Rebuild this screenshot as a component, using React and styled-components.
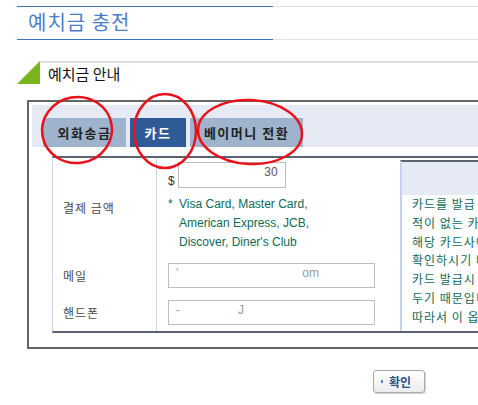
import React from 'react';
import styled, { createGlobalStyle } from 'styled-components';

const GlobalStyle = createGlobalStyle`
  html, body {
    margin: 0;
    padding: 0;
    background: #fff;
    overflow: hidden;
  }
  body {
    font-family: "Noto Sans CJK KR", "Liberation Sans", sans-serif;
    font-size: 12px;
  }
`;

const blue = '#3f6fc1';
const gray = '#e4e4e4';
const dark = '#5b6272';
const pale = '#c8d0ea';
const band = '#e6eaf4';
const teal = '#0e6a57';

const Page = styled.div`
  position: relative;
  width: 478px;
  height: 405px;
  overflow: hidden;
  box-sizing: border-box;
  padding: 6px 0 0 17px;
`;

const Title = styled.h1`
  margin: 0;
  height: 34px;
  padding-left: 11px;
  font-size: 20px;
  font-weight: normal;
  line-height: 31px;
  color: #4b7dcc;
  letter-spacing: 1px;
  background:
    linear-gradient(${blue}, ${blue}) 0 0 / 256px 1px no-repeat,
    linear-gradient(${blue}, ${blue}) 0 100% / 256px 1px no-repeat,
    linear-gradient(${gray}, ${gray}) 0 0 / 100% 1px no-repeat,
    linear-gradient(${gray}, ${gray}) 0 100% / 100% 1px no-repeat;
`;

const SectionHead = styled.div`
  display: flex;
  height: 23px;
  margin-top: 21px;
`;

const SectionLabel = styled.h2`
  flex: 1;
  margin: 0;
  padding-left: 8px;
  border-top: 2px solid #dedede;
  font-size: 15px;
  font-weight: normal;
  line-height: 22px;
  color: #111;
`;

const Box = styled.div`
  width: 520px;
  margin: 16px 0 0 10px;
  padding: 3px 0 14px 3px;
  border: 2px solid #666;
  border-right: none;
`;

const TabBand = styled.div`
  display: flex;
  align-items: flex-end;
  gap: 4px;
  height: 42px;
  padding-left: 11px;
  background: ${band};
`;

const Tab = styled.div`
  display: flex;
  align-items: center;
  justify-content: center;
  width: ${(p) => p.$w}px;
  height: 29px;
  background: ${(p) => (p.$active ? '#2e5b95' : '#a0b3cc')};
  color: ${(p) => (p.$active ? '#fff' : '#222')};
  font-weight: bold;
  font-size: 13px;
  letter-spacing: 1.5px;
`;

const Table = styled.div`
  display: grid;
  grid-template-columns: 104px 243px 1fr;
  margin: 9px 0 0 20px;
  border-top: 2px solid ${dark};
  border-bottom: 2px solid ${dark};
  border-left: 1px solid ${pale};
`;

const Label = styled.div`
  display: flex;
  align-items: center;
  padding-left: 10px;
  border-right: 1px solid ${pale};
  color: #4a4a4a;
  letter-spacing: 1px;
  height: ${(p) => p.$h}px;
`;

const Cell = styled.div`
  display: flex;
  flex-direction: column;
  justify-content: ${(p) => (p.$top ? 'flex-start' : 'center')};
  padding: ${(p) => (p.$top ? '4px' : '0')} 0 0 11px;
  height: ${(p) => p.$h}px;
  box-sizing: border-box;
`;

const AmountRow = styled.div`
  display: flex;
  align-items: flex-end;
  gap: 3px;
  color: #333;
  font-family: "Liberation Sans", sans-serif;
`;

const Field = styled.div`
  display: flex;
  align-items: flex-start;
  justify-content: ${(p) => (p.$right ? 'flex-end' : 'flex-start')};
  box-sizing: border-box;
  width: ${(p) => p.$w}px;
  height: ${(p) => p.$h}px;
  padding: 2px 7px;
  border: 1px solid #bdbdbd;
  color: #555;
  font-family: "Liberation Sans", sans-serif;
  font-size: 12px;
  line-height: 14px;
`;

const Faint = styled.span`
  color: #999;
  margin-left: ${(p) => p.$at}px;
`;

const CardNote = styled.div`
  display: flex;
  margin-top: 7px;
  color: ${teal};
  font-family: "Liberation Sans", sans-serif;
  font-size: 12px;
  line-height: 19px;
`;

const Star = styled.span`
  width: 11px;
  flex: none;
`;

const Notice = styled.div`
  grid-column: 3;
  grid-row: 1 / span 3;
  margin-top: 2px;
  border-top: 2px solid ${dark};
  border-left: 2px solid ${pale};
`;

const NoticeHead = styled.div`
  height: 33px;
  background: ${band};
`;

const NoticeLine = styled.div`
  padding-left: 10px;
  white-space: nowrap;
  color: ${teal};
  line-height: 18.8px;
  letter-spacing: 1px;
`;

const Footer = styled.div`
  display: flex;
  margin-top: 21px;
  padding-left: 356px;
`;

const Button = styled.button`
  display: flex;
  align-items: center;
  gap: 6px;
  width: 52px;
  height: 23px;
  padding: 0 0 0 7px;
  border: 1px solid #aaa;
  border-radius: 3px;
  background: linear-gradient(#fff, #ececec);
  box-shadow: 1px 1px 1px rgba(0, 0, 0, 0.18);
  color: #2c4f8a;
  font-family: "Noto Sans CJK KR", sans-serif;
  font-size: 12px;
  font-weight: bold;
`;

const Dot = styled.span`
  width: 2px;
  height: 3px;
  background: #4a82c8;
`;

const Marks = styled.svg`
  position: absolute;
  left: 0;
  top: 0;
  pointer-events: none;
`;

const notice = [
  '카드를 발급 받으신',
  '적이 없는 카드사의',
  '해당 카드사에 문의하여',
  '확인하시기 바랍니다.',
  '카드 발급시 해외 결제',
  '두기 때문입니다.',
  '따라서 이 옵션을',
];

export default function App() {
  return (
    <Page>
      <GlobalStyle />
      <Title>예치금 충전</Title>

      <SectionHead>
        <svg width="23" height="23" viewBox="0 0 23 23">
          <polygon points="23,0 0,23 23,23" fill="#78b51c" />
        </svg>
        <SectionLabel>예치금 안내</SectionLabel>
      </SectionHead>

      <Box>
        <TabBand>
          <Tab $w={83}>외화송금</Tab>
          <Tab $w={56} $active>카드</Tab>
          <Tab $w={113}>베이머니 전환</Tab>
        </TabBand>

        <Table>
          <Label $h={99}>결제 금액</Label>
          <Cell $h={99} $top>
            <AmountRow>
              <span>$</span>
              <Field $w={108} $h={26} $right>30</Field>
            </AmountRow>
            <CardNote>
              <Star>*</Star>
              <span>
                Visa Card, Master Card,
                <br />
                American Express, JCB,
                <br />
                Discover, Diner's Club
              </span>
            </CardNote>
          </Cell>

          <Notice>
            <NoticeHead />
            {notice.map((line) => (
              <NoticeLine key={line}>{line}</NoticeLine>
            ))}
          </Notice>

          <Label $h={37}>메일</Label>
          <Cell $h={37}>
            <Field $w={207} $h={25}>
              <Faint $at={0}>'</Faint>
              <Faint $at={124}>om</Faint>
            </Field>
          </Cell>

          <Label $h={37}>핸드폰</Label>
          <Cell $h={37}>
            <Field $w={207} $h={25}>
              <Faint $at={0}>-</Faint>
              <Faint $at={58}>J</Faint>
            </Field>
          </Cell>
        </Table>
      </Box>

      <Footer>
        <Button type="button">
          <Dot />
          확인
        </Button>
      </Footer>

      <Marks width="478" height="405" viewBox="0 0 478 405">
        <g fill="none" stroke="#e8121a" strokeWidth="2.5">
          <ellipse cx="77" cy="130" rx="35" ry="33" transform="rotate(-10 77 130)" />
          <ellipse cx="165" cy="131" rx="31" ry="37" />
          <ellipse cx="250" cy="132" rx="52" ry="32" transform="rotate(3 250 132)" />
        </g>
      </Marks>
    </Page>
  );
}
